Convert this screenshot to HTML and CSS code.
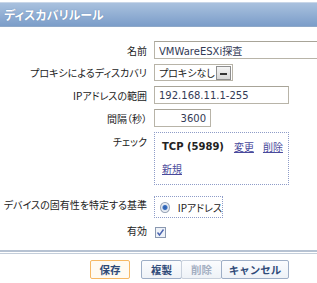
FILE: index.html
```html
<!DOCTYPE html>
<html>
<head>
  <title>ディスカバリルール</title>
  <link rel="stylesheet" href="styles.css">
</head>
<body>
  <div class="header">
    <h1>ディスカバリルール</h1>
  </div>

  <form class="rule-form">
    <label class="lbl">名前</label>
    <div class="field"><input type="text" class="text name" value="VMWareESXi探査"></div>

    <label class="lbl">プロキシによるディスカバリ</label>
    <div class="field">
      <div class="select">プロキシなし<span class="drop"><span class="arrow"></span></span></div>
    </div>

    <label class="lbl">IPアドレスの範囲</label>
    <div class="field"><input type="text" class="text range" value="192.168.11.1-255"></div>

    <label class="lbl">間隔（秒）</label>
    <div class="field"><input type="text" class="text delay" value="3600"></div>

    <label class="lbl top">チェック</label>
    <div class="field">
      <div class="box checks">
        <div class="check-line"><b>TCP (5989)</b><a href="#">変更</a><a href="#">削除</a></div>
        <div class="check-line"><a href="#" class="first">新規</a></div>
      </div>
    </div>

    <label class="lbl">デバイスの固有性を特定する基準</label>
    <div class="field">
      <div class="box uniq"><span class="radio"></span>IPアドレス</div>
    </div>

    <label class="lbl">有効</label>
    <div class="field">
      <span class="checkbox">
        <svg width="9" height="9" viewBox="0 0 9 9"><path d="M1.5 4.5 L3.5 7 L7.5 1.5" fill="none" stroke="#4a64b0" stroke-width="1.4"/></svg>
      </span>
    </div>
  </form>

  <div class="footer">
    <button type="button" class="btn main">保存</button>
    <div class="group">
      <button type="button" class="btn">複製</button>
      <button type="button" class="btn off">削除</button>
      <button type="button" class="btn">キャンセル</button>
    </div>
  </div>
</body>
</html>
```

FILE: styles.css
```css
html, body {
  overflow: hidden;
}

body {
  margin: 0;
  background: #fff;
  font-family: "DejaVu Sans", "Noto Sans CJK JP", sans-serif;
  font-size: 10px;
  color: #222;
  font-feature-settings: "palt";
  white-space: nowrap;
}

.header {
  margin-top: 2px;
  border-top: 1px solid #c8d6e8;
  border-bottom: 1px solid #8ea8c8;
  height: 23px;
  background: linear-gradient(#a9c1de, #7b9dc9);
  display: flex;
  align-items: center;
  padding-left: 4px;
}

h1 {
  margin: 0;
  font-family: "Noto Sans CJK JP", sans-serif;
  font-size: 12px;
  font-weight: bold;
  color: #fff;
  text-shadow: 0 0 1px #5a7aa8;
}

.rule-form {
  display: grid;
  grid-template-columns: 147px 1fr;
  column-gap: 7px;
  row-gap: 5px;
  margin-top: 14px;
}

.lbl {
  font-family: "Noto Sans CJK JP", sans-serif;
  font-size: 10px;
  text-align: right;
  align-self: center;
}

.lbl.top {
  align-self: start;
  padding-top: 2px;
}

.field {
  display: flex;
  align-items: center;
}

.text {
  box-sizing: border-box;
  height: 18px;
  border: 1px solid #b8b4a8;
  border-top-color: #a8a498;
  padding: 0 4px;
  font-family: "DejaVu Sans", "Noto Sans CJK JP", sans-serif;
  font-size: 10px;
  color: #333a55;
  background: #fff;
  outline: none;
}

.name {
  width: 200px;
}

.range {
  width: 135px;
}

.delay {
  width: 57px;
  text-align: right;
}

.select {
  box-sizing: border-box;
  height: 17px;
  width: 79px;
  border: 1px solid #b8b4a8;
  display: flex;
  align-items: center;
  justify-content: space-between;
  padding: 0 1px 0 4px;
  font-family: "Noto Sans CJK JP", sans-serif;
  font-size: 10px;
}

.drop {
  width: 13px;
  height: 12px;
  border: 1px solid #8e8e8e;
  background: linear-gradient(#f4f4f4, #d6d6d6);
  display: flex;
  align-items: center;
  justify-content: center;
}

.arrow {
  width: 7px;
  height: 2px;
  margin-top: 3px;
  background: #333;
}

.box {
  box-sizing: border-box;
  border: 1px dotted #8e9cc8;
}

.checks {
  width: 135px;
  height: 53px;
  padding: 5px 7px;
}

.check-line {
  display: flex;
  align-items: center;
  height: 16px;
  margin-bottom: 6px;
}

.check-line b {
  font-size: 10px;
  margin-right: 10px;
}

.check-line a {
  font-family: "Noto Sans CJK JP", sans-serif;
  font-size: 10px;
  color: #4a4a9c;
  text-decoration: underline;
  margin-right: 9px;
}

.uniq {
  width: 69px;
  height: 22px;
  margin-top: 6px;
  display: flex;
  align-items: center;
  padding-left: 5px;
  font-family: "Noto Sans CJK JP", sans-serif;
  font-size: 10px;
}

.radio {
  width: 9px;
  height: 9px;
  border-radius: 50%;
  border: 1px solid #9aa6b8;
  background: radial-gradient(circle, #2a5caa 0, #3a70c0 2px, #dfe6f0 3px, #f6f8fb 5px);
  margin-right: 8px;
}

.checkbox {
  box-sizing: border-box;
  width: 11px;
  height: 11px;
  margin: 4px 0 0 1px;
  border: 1px solid #8a98b0;
  background: #eef2f8;
  display: flex;
  align-items: center;
  justify-content: center;
}

.footer {
  margin-top: 12px;
  border-top: 2px solid #b6c2d2;
  padding-top: 4px;
  display: flex;
  justify-content: flex-end;
  gap: 11px;
  padding-right: 28px;
  position: relative;
}

.footer::before {
  content: "";
  position: absolute;
  left: 0;
  right: 0;
  top: 1px;
  border-top: 1px solid #c4ceda;
}

.group {
  display: flex;
}

.btn {
  box-sizing: border-box;
  height: 19px;
  padding: 0;
  border: 1px solid #9eaec6;
  border-radius: 2px;
  background: linear-gradient(#fbfcfe, #eef2f7);
  font-family: "Noto Sans CJK JP", sans-serif;
  font-size: 10.5px;
  font-weight: bold;
  color: #2f4a78;
  margin-top: 4px;
}

.btn.main {
  width: 40px;
  border-color: #f6b864;
  background: #fffaf2;
}

.group .btn {
  width: 41px;
}

.group .btn + .btn {
  margin-left: -1px;
}

.group .btn:last-child {
  width: 68px;
}

.btn.off {
  color: #a4afc2;
  border-color: #c8d0dc;
}
```
